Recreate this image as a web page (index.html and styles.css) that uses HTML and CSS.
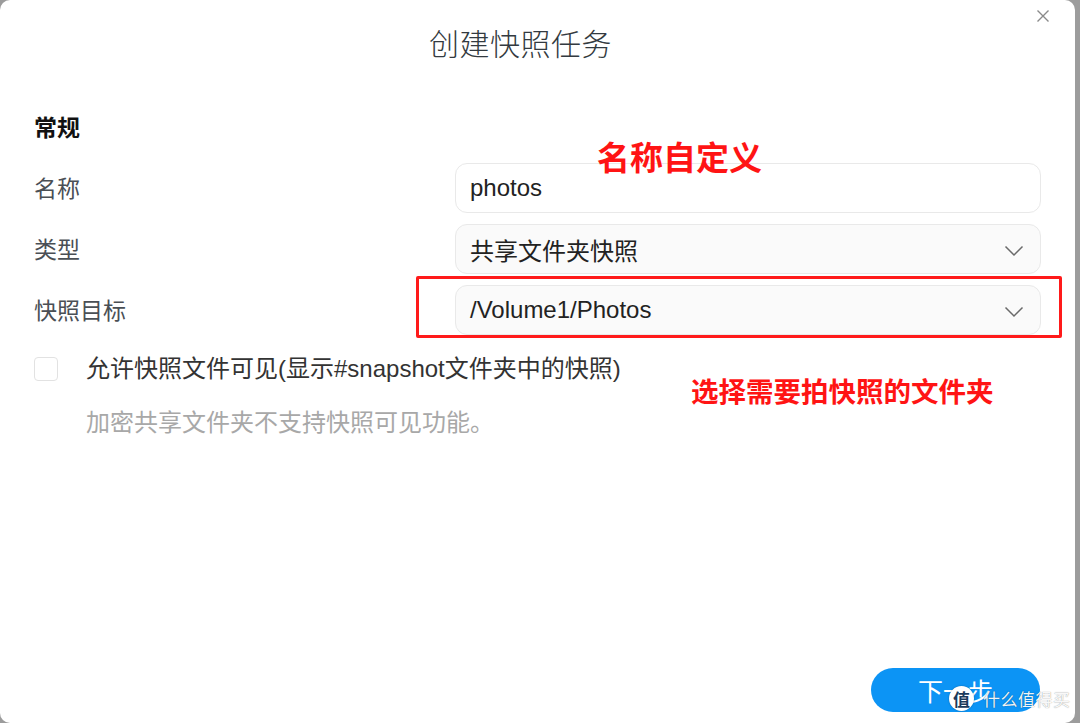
FILE: index.html
```html
<!DOCTYPE html>
<html lang="zh-CN">
<head>
<meta charset="utf-8">
<title>创建快照任务</title>
<link rel="stylesheet" href="styles.css">
</head>
<body>
<div class="panel">
  <div class="header">
    <h1 class="title">创建快照任务</h1>
    <button class="close" aria-label="关闭">
      <svg width="14" height="14" viewBox="0 0 14 14"><path d="M1.5 1.5 L12.5 12.5 M12.5 1.5 L1.5 12.5" stroke="#8a8a8a" stroke-width="1.4" fill="none"/></svg>
    </button>
  </div>
  <div class="body">
    <div class="section-title">常规</div>
    <div class="rows">
      <div class="row">
        <div class="label">名称</div>
        <div class="field field-input">photos</div>
      </div>
      <div class="row">
        <div class="label">类型</div>
        <div class="field field-select">
          <span>共享文件夹快照</span>
          <svg class="chev" width="20" height="12" viewBox="0 0 20 12"><path d="M1.5 1.5 L10 10 L18.5 1.5" stroke="#6a6a6a" stroke-width="1.5" fill="none"/></svg>
        </div>
      </div>
      <div class="row">
        <div class="label">快照目标</div>
        <div class="field field-select">
          <span>/Volume1/Photos</span>
          <svg class="chev" width="20" height="12" viewBox="0 0 20 12"><path d="M1.5 1.5 L10 10 L18.5 1.5" stroke="#6a6a6a" stroke-width="1.5" fill="none"/></svg>
        </div>
      </div>
    </div>
    <div class="check-row">
      <span class="checkbox"></span>
      <span class="check-label">允许快照文件可见(显示#snapshot文件夹中的快照)</span>
    </div>
    <div class="hint">加密共享文件夹不支持快照可见功能。</div>
  </div>
  <div class="footer">
    <button class="next">下一步</button>
  </div>

  <div class="anno-box"></div>
  <div class="anno anno-name">名称自定义</div>
  <div class="anno anno-folder">选择需要拍快照的文件夹</div>

  <div class="watermark">
    <span class="wm-logo">值</span>
    <span class="wm-text">什么值得买</span>
  </div>
</div>
</body>
</html>
```
FILE: styles.css
```css
* { box-sizing: border-box; }
html, body { margin: 0; padding: 0; }
body {
  width: 1080px;
  height: 723px;
  background: #9c9c9c;
  font-family: "Liberation Sans", "Noto Sans CJK SC", sans-serif;
  overflow: hidden;
}
.panel {
  position: relative;
  width: 1075px;
  height: 723px;
  background: #ffffff;
  border-radius: 10px;
  display: flex;
  flex-direction: column;
}
.header {
  height: 84px;
  display: flex;
  align-items: center;
  justify-content: center;
  padding-right: 34px;
}
.title {
  margin: 0;
  font-family: "Noto Sans CJK SC", sans-serif;
  font-weight: 300;
  font-size: 30px;
  color: #333a40;
  letter-spacing: 0.5px;
}
.close {
  position: absolute;
  top: 9px;
  left: 1036px;
  width: 14px;
  height: 14px;
  padding: 0;
  border: 0;
  background: none;
  display: flex;
}
.body {
  padding: 0 34px;
}
.section-title {
  margin-top: 24px;
  height: 36px;
  line-height: 36px;
  font-family: "Noto Sans CJK SC", sans-serif;
  font-weight: 700;
  font-size: 23px;
  color: #111;
}
.rows {
  margin-top: 19px;
  display: flex;
  flex-direction: column;
  gap: 11px;
}
.row {
  display: flex;
  align-items: center;
  height: 50px;
}
.label {
  width: 421px;
  font-family: "Noto Sans CJK SC", sans-serif;
  font-size: 23px;
  color: #4a4f55;
  margin-top: -2px;
}
.field {
  width: 586px;
  height: 50px;
  border: 1px solid #e9e9e9;
  border-radius: 12px;
  padding: 0 14px;
  display: flex;
  align-items: center;
  font-size: 24px;
  color: #222;
}
.field-input { background: #ffffff; }
.field-select {
  background: #fafafa;
  justify-content: space-between;
}
.field-select span { font-family: "Liberation Sans", "Noto Sans CJK SC", sans-serif; }
.chev { margin-right: 2px; margin-top: 4px; }
.check-row {
  margin-top: 22px;
  display: flex;
  align-items: center;
  gap: 28px;
  height: 24px;
}
.checkbox {
  width: 24px;
  height: 24px;
  border: 1px solid #e2e2e2;
  border-radius: 4px;
  background: #fff;
}
.check-label {
  font-size: 24px;
  color: #333;
  line-height: 24px;
}
.hint {
  margin-top: 23px;
  padding-left: 52px;
  line-height: 34px;
  font-family: "Noto Sans CJK SC", sans-serif;
  font-size: 24px;
  color: #a8a8a8;
}
.footer {
  margin-top: auto;
  display: flex;
  justify-content: flex-end;
  padding: 0 35px 11px 0;
}
.next {
  width: 169px;
  height: 44px;
  border: 0;
  border-radius: 22px;
  background: #0c94f5;
  color: #fff;
  font-family: "Noto Sans CJK SC", sans-serif;
  font-size: 25px;
  padding: 0;
}
.anno-box {
  position: absolute;
  left: 416px;
  top: 276px;
  width: 646px;
  height: 62px;
  border: 3px solid #ff1a1a;
  border-radius: 2px;
}
.anno {
  position: absolute;
  font-family: "Noto Sans CJK SC", sans-serif;
  font-weight: 700;
  color: #ff1414;
  white-space: nowrap;
}
.anno-name {
  left: 597px;
  top: 134px;
  font-size: 33px;
  line-height: 44px;
}
.anno-folder {
  left: 691px;
  top: 372px;
  font-size: 27.5px;
  line-height: 36px;
}
.watermark {
  position: absolute;
  left: 949px;
  top: 686px;
  display: flex;
  align-items: center;
  gap: 9px;
}
.wm-logo {
  width: 25px;
  height: 25px;
  border-radius: 50%;
  background: #fff;
  color: #1b3a5c;
  font-family: "Noto Sans CJK SC", sans-serif;
  font-weight: 700;
  font-size: 17px;
  line-height: 25px;
  text-align: center;
  box-shadow: 0 0 2px rgba(0,0,0,0.3);
}
.wm-text {
  font-family: "Noto Sans CJK SC", sans-serif;
  font-size: 17px;
  color: rgba(255,255,255,0.95);
  text-shadow: 0 0 1px rgba(0,0,0,0.5);
  letter-spacing: 0.5px;
}
```
